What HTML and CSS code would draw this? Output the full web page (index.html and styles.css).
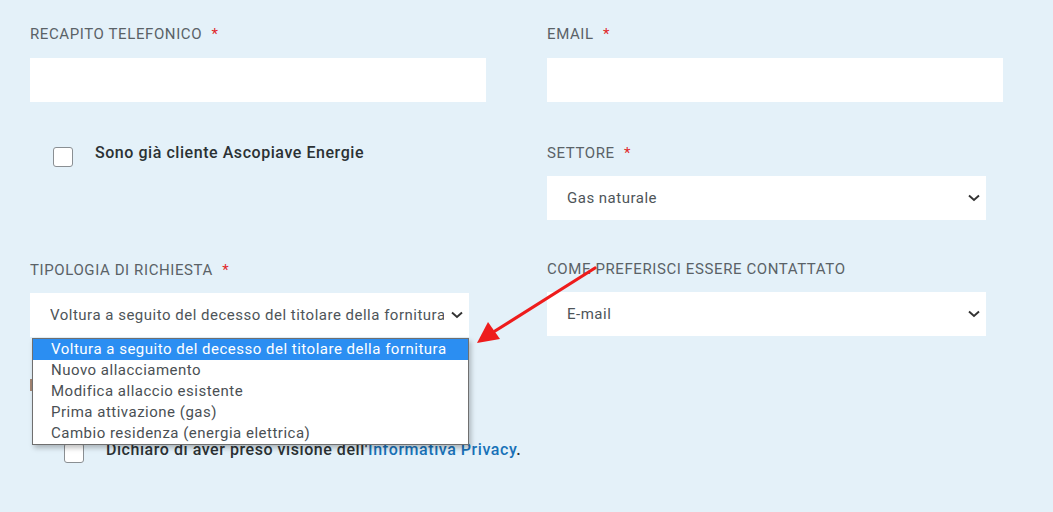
FILE: index.html
```html
<!DOCTYPE html>
<html lang="it">
<head>
<meta charset="utf-8">
<title>Modulo</title>
<link rel="stylesheet" href="styles.css">
</head>
<body>
<form class="form">
  <div class="row row-1">
    <div class="field">
      <label class="label">RECAPITO TELEFONICO <span class="req">*</span></label>
      <div class="input"></div>
    </div>
    <div class="field">
      <label class="label">EMAIL <span class="req">*</span></label>
      <div class="input"></div>
    </div>
  </div>

  <div class="row row-2">
    <div class="field">
      <div class="check check-client">
        <span class="box"></span>
        <span class="check-text">Sono già cliente Ascopiave Energie</span>
      </div>
    </div>
    <div class="field">
      <label class="label">SETTORE <span class="req">*</span></label>
      <div class="select">
        <span class="select-text">Gas naturale</span>
        <svg class="chev" viewBox="0 0 12 8" width="12" height="8"><path d="M1 1.5 L6 6 L11 1.5" fill="none" stroke="#333" stroke-width="1.9"/></svg>
      </div>
    </div>
  </div>

  <div class="row row-3">
    <div class="field field-tipologia">
      <label class="label">TIPOLOGIA DI RICHIESTA <span class="req">*</span></label>
      <div class="select select-open">
        <span class="select-text clip">Voltura a seguito del decesso del titolare della fornitura</span>
        <svg class="chev" viewBox="0 0 12 8" width="12" height="8"><path d="M1 1.5 L6 6 L11 1.5" fill="none" stroke="#333" stroke-width="1.9"/></svg>
      </div>
      <ul class="dropdown">
        <li class="opt selected">Voltura a seguito del decesso del titolare della fornitura</li>
        <li class="opt">Nuovo allacciamento</li>
        <li class="opt">Modifica allaccio esistente</li>
        <li class="opt">Prima attivazione (gas)</li>
        <li class="opt">Cambio residenza (energia elettrica)</li>
      </ul>
    </div>
    <div class="field field-contact">
      <label class="label">COME PREFERISCI ESSERE CONTATTATO</label>
      <div class="select">
        <span class="select-text">E-mail</span>
        <svg class="chev" viewBox="0 0 12 8" width="12" height="8"><path d="M1 1.5 L6 6 L11 1.5" fill="none" stroke="#333" stroke-width="1.9"/></svg>
      </div>
    </div>
  </div>

  <div class="row-4">
    <span class="hidden-box"></span>
  </div>

  <div class="check check-privacy">
    <span class="box"></span>
    <span class="check-text">Dichiaro di aver preso visione dell'<a class="link" href="#">Informativa Privacy</a>.</span>
  </div>
</form>

<svg class="arrow" width="140" height="90" viewBox="0 0 140 90">
  <line x1="124" y1="4" x2="24" y2="67" stroke="#ee1c1c" stroke-width="3.2" stroke-linecap="round"/>
  <polygon points="6,79 17,58 29,75" fill="#ee1c1c"/>
</svg>
</body>
</html>
```
FILE: styles.css
```css
html, body {
  margin: 0;
  padding: 0;
}
body {
  background: #e4f1f9;
  font-family: Roboto, "Liberation Sans", sans-serif;
  color: #333;
  width: 1053px;
  height: 512px;
  overflow: hidden;
  position: relative;
}
.form {
  padding: 25px 0 0 30px;
}
.row {
  display: grid;
  grid-template-columns: 456px 456px;
  column-gap: 61px;
}
.field {
  display: flex;
  flex-direction: column;
  position: relative;
}
.label {
  font-size: 15px;
  line-height: 18px;
  color: #5a6267;
  font-weight: 400;
  letter-spacing: 0.6px;
  height: 18px;
}
.req {
  color: #e0282a;
  margin-left: 5px;
}
.input {
  margin-top: 15px;
  height: 44px;
  background: #fff;
}
.row-2 {
  margin-top: 42px;
}
.check {
  display: flex;
  align-items: flex-start;
}
.box {
  width: 18px;
  height: 18px;
  border: 1px solid #8a8f93;
  border-radius: 3px;
  background: #fff;
  flex: none;
}
.check-text {
  font-size: 16px;
  font-weight: 500;
  color: #2b3134;
  line-height: 18px;
  letter-spacing: 0.55px;
}
.check-client {
  margin-top: 3px;
  padding-left: 23px;
}
.check-client .check-text {
  margin-left: 22px;
  margin-top: -3px;
}
.select {
  margin-top: 14px;
  width: 439px;
  height: 44px;
  background: #fff;
  display: flex;
  align-items: center;
  padding: 0 6px 0 20px;
  box-sizing: border-box;
}
.select-text {
  font-size: 15px;
  color: #4e5559;
  letter-spacing: 0.5px;
  flex: 1;
  white-space: nowrap;
}
.clip {
  overflow: hidden;
  max-width: 394px;
  flex: none;
}
.select-open {
  padding-right: 0;
}
.select-open .chev {
  margin-left: 7px;
}
.chev {
  flex: none;
}
.row-3 {
  margin-top: 41px;
}
.field-contact {
  margin-top: -1px;
}
.dropdown {
  position: absolute;
  left: 2px;
  top: 77px;
  width: 437px;
  margin: 0;
  padding: 0;
  list-style: none;
  background: #fff;
  border: 1px solid #6f6f6f;
  box-sizing: border-box;
  box-shadow: 2px 3px 5px rgba(0, 0, 0, 0.25);
  z-index: 5;
}
.opt {
  font-size: 15px;
  letter-spacing: 0.5px;
  line-height: 21px;
  height: 21px;
  padding-left: 18px;
  color: #4a5054;
  white-space: nowrap;
}
.opt.selected {
  background: #2b8ef2;
  color: #fff;
}
.row-4 {
  height: 100px;
  padding-top: 42px;
  box-sizing: border-box;
}
.hidden-box {
  display: block;
  width: 18px;
  height: 12px;
  border-left: 2px solid #a58674;
}
.check-privacy {
  padding-left: 34px;
  margin-top: 6px;
}
.check-privacy .check-text {
  margin-left: 22px;
  margin-top: -2px;
}
.link {
  color: #1872b8;
  text-decoration: none;
}
.arrow {
  position: absolute;
  left: 471px;
  top: 264px;
  z-index: 10;
}
```
